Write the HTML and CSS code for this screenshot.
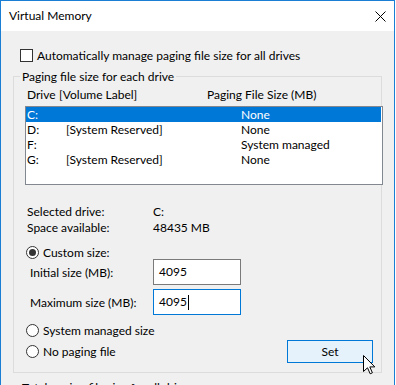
FILE: index.html
```html
<!DOCTYPE html>
<html>
<head>
<meta charset="utf-8">
<link rel="stylesheet" href="styles.css">
</head>
<body>
<div class="window">
  <div class="titlebar">
    <span class="title">Virtual Memory</span>
    <svg class="close" width="11" height="11" viewBox="0 0 11 11"><path d="M0.5 0.5 L10.5 10.5 M10.5 0.5 L0.5 10.5" stroke="#000" stroke-width="1" fill="none"/></svg>
  </div>
  <div class="content">
    <div class="check-row"><span class="checkbox"></span><span>Automatically manage paging file size for all drives</span></div>
    <fieldset class="group">
      <legend>Paging file size for each drive</legend>
      <div class="group-body">
        <div class="list-head"><span class="h-drive">Drive</span><span class="h-label">[Volume Label]</span><span class="h-size">Paging File Size (MB)</span></div>
        <div class="listbox">
          <div class="row selected"><span class="c-drive">C:</span><span class="c-label"></span><span class="c-size">None</span></div>
          <div class="row"><span class="c-drive">D:</span><span class="c-label">[System Reserved]</span><span class="c-size">None</span></div>
          <div class="row"><span class="c-drive">F:</span><span class="c-label"></span><span class="c-size">System managed</span></div>
          <div class="row"><span class="c-drive">G:</span><span class="c-label">[System Reserved]</span><span class="c-size">None</span></div>
        </div>
        <div class="info">
          <span class="info-k">Selected drive:</span><span class="info-v">C:</span>
          <span class="info-k">Space available:</span><span class="info-v">48435 MB</span>
        </div>
        <div class="radio-row custom"><span class="radio checked"></span><span>Custom size:</span></div>
        <div class="sizes">
          <div class="size-row"><span class="size-label">Initial size (MB):</span><div class="textbox">4095</div></div>
          <div class="size-row"><span class="size-label">Maximum size (MB):</span><div class="textbox focused">4095<span class="caret"></span></div></div>
        </div>
        <div class="bottom">
          <div class="radios">
            <div class="radio-row tall"><span class="radio"></span><span>System managed size</span></div>
            <div class="radio-row tall"><span class="radio"></span><span>No paging file</span></div>
          </div>
          <div class="button">Set</div>
        </div>
      </div>
    </fieldset>
    <div class="total">Total paging file size for all drives</div>
  </div>
</div>
<svg class="cursor" width="13" height="20" viewBox="0 0 13 20"><path d="M0.5 0.5 L0.5 16.5 L4.5 12.8 L7.2 18.8 L9.4 17.8 L6.8 11.9 L11.8 11.9 Z" fill="#fff" stroke="#000" stroke-width="1" stroke-linejoin="miter"/></svg>
</body>
</html>
```

FILE: styles.css
```css
html, body {
  margin: 0;
  padding: 0;
}
body {
  width: 396px;
  height: 385px;
  overflow: hidden;
  background: #ffffff;
  position: relative;
  font-family: Lato, "Noto Sans", sans-serif;
  font-size: 12px;
  color: #000;
}
.window {
  width: 393px;
  height: 400px;
  border-top: 1px solid #1a7fd4;
  border-left: 1px solid #1a7fd4;
  border-right: 1px solid #1a7fd4;
  background: #f0f0f0;
}
.titlebar {
  height: 30px;
  background: #fff;
  display: flex;
  align-items: center;
  justify-content: space-between;
  padding: 0 8px 0 8px;
}
.title {
  font-size: 12px;
  line-height: 16px;
}
.close {
  display: block;
}
.content {
  padding-top: 18px;
}
.check-row {
  display: flex;
  align-items: center;
  height: 13px;
  margin-left: 19px;
  line-height: 16px;
}
.checkbox {
  width: 11px;
  height: 11px;
  border: 1px solid #333;
  background: #fff;
  margin-right: 4px;
  flex: none;
}
.group {
  margin: 7px 0 0 12px;
  padding: 0;
  width: 367px;
  border: 1px solid #dcdcdc;
  min-width: 0;
}
.group legend {
  margin-left: 6px;
  padding: 0 2px;
  line-height: 15px;
  height: 15px;
}
.group-body {
  padding: 3px 0 9px 11px;
}
.list-head {
  display: flex;
  line-height: 16px;
  height: 16px;
}
.h-drive {
  margin-left: 2px;
  width: 32px;
}
.h-label {
  width: 148px;
}
.listbox {
  margin-top: 3px;
  width: 356px;
  height: 77px;
  border: 1px solid #828790;
  background: #fff;
}
.row {
  display: flex;
  height: 15px;
  line-height: 15px;
  margin-right: 1px;
}
.row.selected {
  background: #0078d7;
  color: #fff;
}
.c-drive {
  width: 39px;
  padding-left: 1px;
}
.c-label {
  width: 175px;
}
.info {
  margin-top: 19px;
  display: grid;
  grid-template-columns: 126px auto;
  line-height: 16px;
  padding-left: 2px;
}
.radio-row {
  display: flex;
  align-items: center;
  margin-left: 1px;
}
.radio-row.custom {
  margin-top: 9px;
  height: 14px;
}
.radio-row.tall {
  height: 21px;
}
.radio {
  width: 11px;
  height: 11px;
  border: 1px solid #333;
  border-radius: 50%;
  background: #fff;
  margin-right: 4px;
  flex: none;
  position: relative;
}
.radio.checked::after {
  content: "";
  position: absolute;
  left: 2px;
  top: 2px;
  width: 7px;
  height: 7px;
  border-radius: 50%;
  background: #333;
}
.sizes {
  display: flex;
  flex-direction: column;
  gap: 4px;
}
.size-row {
  display: flex;
  align-items: center;
  height: 26px;
}
.size-label {
  width: 123px;
  padding-left: 5px;
}
.textbox {
  box-sizing: border-box;
  width: 88px;
  height: 26px;
  border: 1px solid #7a7a7a;
  background: #fff;
  padding-left: 5px;
  line-height: 22px;
  display: flex;
  align-items: center;
}
.textbox.focused {
  border-color: #0078d7;
}
.caret {
  display: inline-block;
  width: 1px;
  height: 15px;
  background: #000;
  margin-left: 1px;
}
.bottom {
  display: flex;
  justify-content: space-between;
  margin-top: 5px;
}
.button {
  box-sizing: border-box;
  width: 86px;
  height: 23px;
  margin-top: 20px;
  margin-right: 8px;
  border: 1px solid #0078d7;
  background: #e5f1fb;
  display: flex;
  align-items: center;
  justify-content: center;
}
.total {
  margin: 7px 0 0 21px;
  line-height: 16px;
}
.cursor {
  position: absolute;
  left: 363px;
  top: 355px;
}
```
